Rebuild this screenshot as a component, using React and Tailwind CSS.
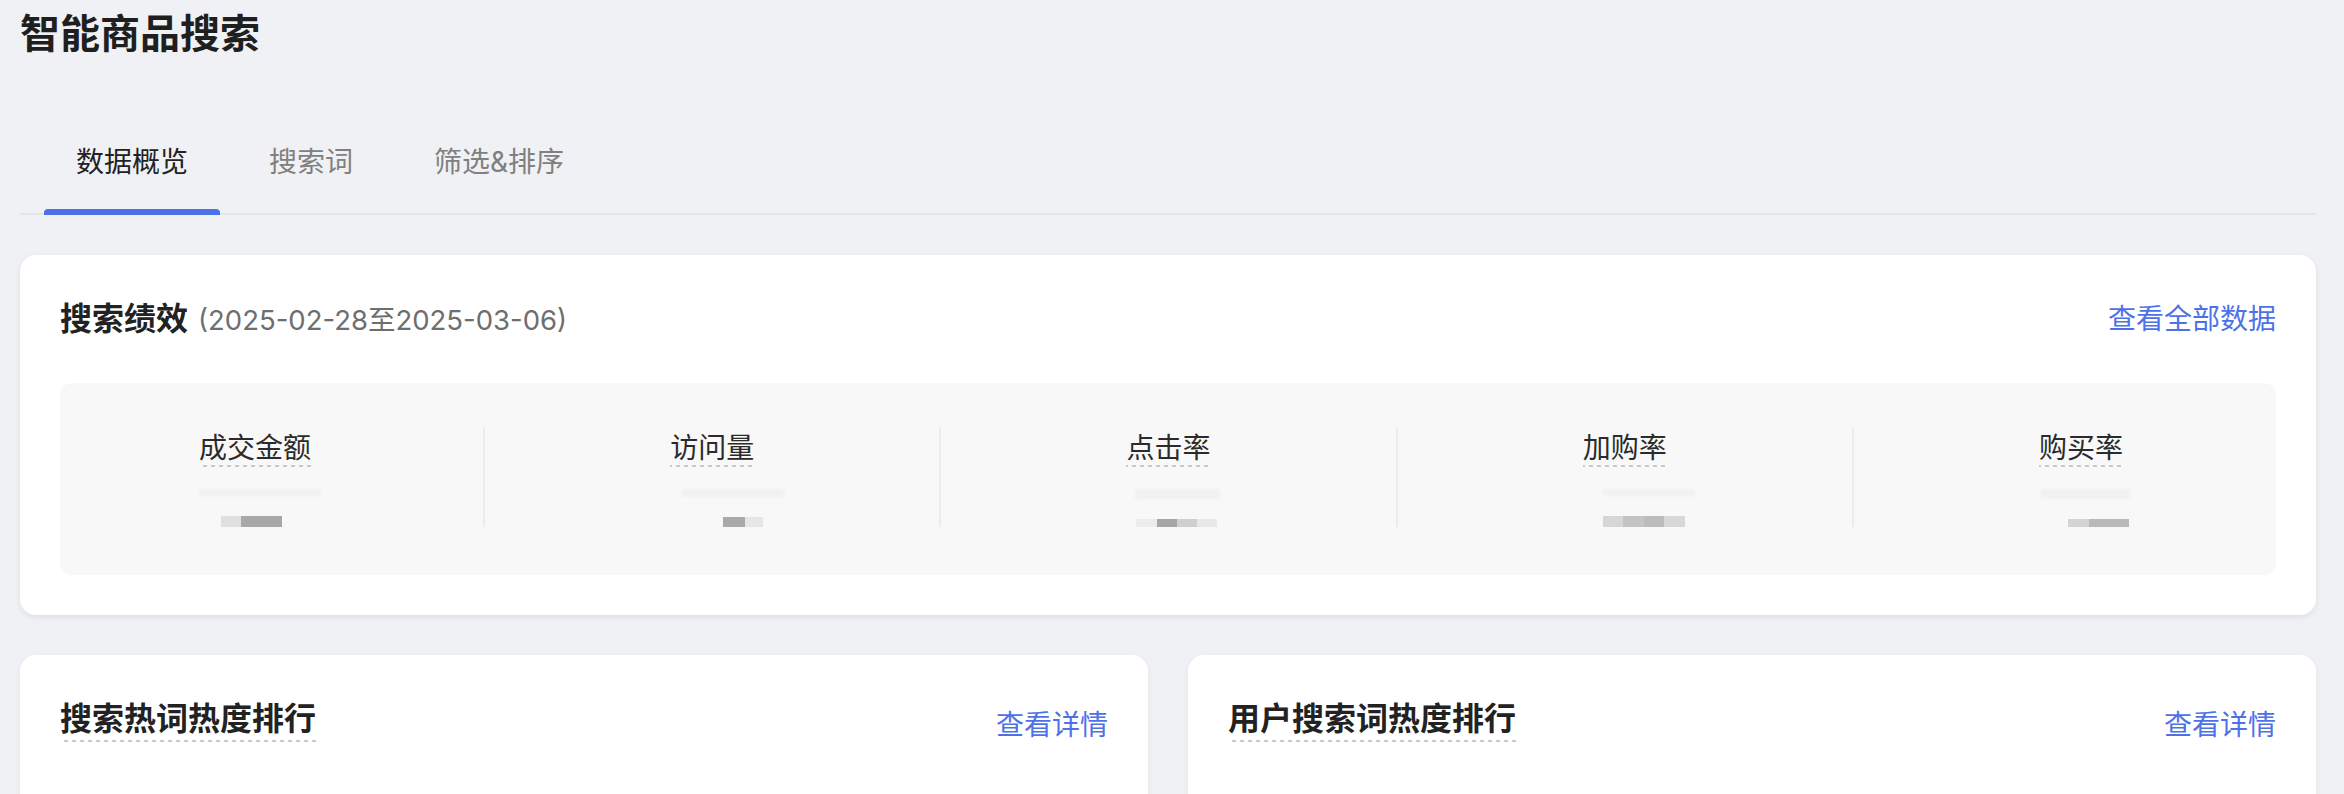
const TABS = ['数据概览', '搜索词', '筛选&排序']

// blurred (masked) values under each metric: offset from column centre, segments [width, colour]
const METRICS = [
  { label: '成交金额', top: { off: 5, w: 121 }, bottom: { off: -4, h: 23, segs: [[20, '#e0e0e0'], [41, '#a8a8a8']] } },
  { label: '访问量', top: { off: 21, w: 102 }, bottom: { off: 31, h: 20, segs: [[22, '#a9a9a9'], [18, '#e6e6e6']] } },
  { label: '点击率', top: { off: 9, w: 85 }, bottom: { off: 8, h: 13, segs: [[21, '#ececec'], [20, '#a6a6a6'], [20, '#cfcfcf'], [20, '#e8e8e8']] } },
  { label: '加购率', top: { off: 24, w: 92 }, bottom: { off: 19, h: 22, segs: [[20, '#d6d6d6'], [21, '#c4c4c4'], [20, '#bcbcbc'], [21, '#d8d8d8']] } },
  { label: '购买率', top: { off: 5, w: 89 }, bottom: { off: 18, h: 12, segs: [[21, '#d4d4d4'], [40, '#b9b9b9']] } },
]

const dashed =
  'bg-[linear-gradient(to_right,#c9c9c9_45%,transparent_45%)] bg-[length:8px_2px] bg-repeat-x bg-bottom'

function MetricCell({ metric, first }) {
  return (
    <div className={`h-[100px] flex flex-col items-center ${first ? '' : 'border-l-2 border-[#ececec]'}`}>
      <span className={`mt-[2px] inline-block text-[28px] leading-[38px] text-[#2b2b2b] ${dashed}`}>
        {metric.label}
      </span>
      {/* masked value */}
      <div
        className="mt-[22px] h-[15px] bg-[#f1f1f1] blur-[1px]"
        style={{ width: metric.top.w, transform: `translateX(${metric.top.off}px)` }}
      />
      <div
        className="mt-[20px] flex blur-[0.6px]"
        style={{ height: metric.bottom.h, transform: `translateX(${metric.bottom.off}px)` }}
      >
        {metric.bottom.segs.map(([w, c], i) => (
          <div key={i} className="h-full" style={{ width: w, background: c }} />
        ))}
      </div>
    </div>
  )
}

function RankCard({ title }) {
  return (
    <div className="bg-white rounded-[16px] shadow-[0_2px_6px_rgba(0,0,0,0.06)] px-[40px] pt-[40px] h-[520px]">
      <div className="flex items-center justify-between h-[48px]">
        <span className={`inline-block text-[32px] leading-[44px] pb-[1px] font-semibold text-[#222] ${dashed}`}>
          {title}
        </span>
        <span className="mt-[12px] text-[28px] leading-[40px] text-[#4d72e8]">查看详情</span>
      </div>
    </div>
  )
}

export default function App() {
  return (
    <div className="min-h-screen bg-[#f0f1f4] pl-[20px] pr-[28px] pt-[10px] pb-[40px] font-['Inter','Noto_Sans_CJK_SC',sans-serif]">
      {/* Page title */}
      <h1 className="text-[40px] leading-[48px] font-bold text-[#1f1f1f]">智能商品搜索</h1>

      {/* Tabs */}
      <div className="mt-[81px] flex gap-[17px] pl-[24px] border-b-2 border-[#e3e4e8]">
        {TABS.map((t, i) => (
          <div
            key={t}
            className={`relative px-[32px] pt-[3px] pb-[31px] text-[28px] leading-[40px] ${i === 0 ? 'text-[#222]' : 'text-[#808080]'}`}
          >
            {t}
            {i === 0 && (
              <div className="absolute left-0 right-0 bottom-[-2px] h-[6px] rounded-t-[4px] bg-[#4d72e8]" />
            )}
          </div>
        ))}
      </div>

      {/* Search performance */}
      <div className="mt-[40px] bg-white rounded-[16px] shadow-[0_2px_6px_rgba(0,0,0,0.08)] p-[40px]">
        <div className="flex items-center justify-between h-[48px]">
          <div className="flex items-baseline gap-[10px]">
            <span className="text-[32px] leading-[44px] font-semibold text-[#222]">搜索绩效</span>
            <span className="text-[27.5px] leading-[44px] text-[#6e6e6e]">(2025-02-28至2025-03-06)</span>
          </div>
          <span className="text-[28px] leading-[40px] text-[#4d72e8]">查看全部数据</span>
        </div>

        <div className="mt-[40px] rounded-[12px] bg-[#f8f8f9] pt-[44px] pb-[48px]">
          <div className="grid grid-cols-5 ml-[-33px] mr-[-32px]">
            {METRICS.map((m, i) => (
              <MetricCell key={m.label} metric={m} first={i === 0} />
            ))}
          </div>
        </div>
      </div>

      {/* Rankings */}
      <div className="mt-[40px] grid grid-cols-2 gap-[40px]">
        <RankCard title="搜索热词热度排行" />
        <RankCard title="用户搜索词热度排行" />
      </div>
    </div>
  )
}
